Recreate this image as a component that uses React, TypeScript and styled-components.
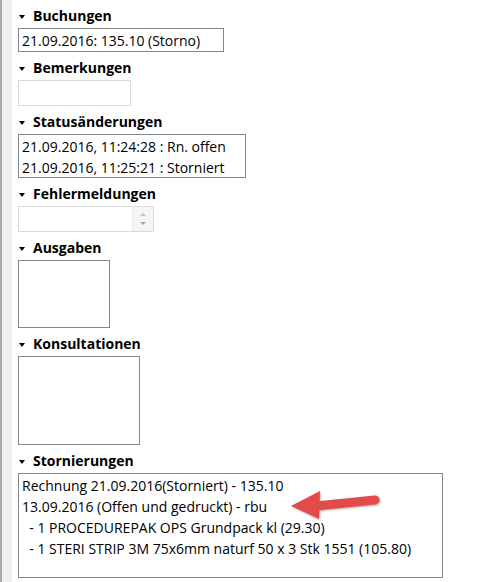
import React from 'react';
import styled, { createGlobalStyle } from 'styled-components';

const GlobalStyle = createGlobalStyle`
  html, body {
    margin: 0;
    padding: 0;
    background: #ffffff;
  }
  body {
    font-family: 'Open Sans', 'Segoe UI', 'Noto Sans', sans-serif;
    font-size: 14px;
    color: #000;
  }
`;

const Page = styled.div`
  display: flex;
  width: 504px;
  height: 582px;
  overflow: hidden;
`;

const SideStrip = styled.div`
  width: 10px;
  flex: none;
  border-left: 2px solid #a9a9a9;
  background: #f0f0f0;
`;

const Content = styled.div`
  flex: 1;
  padding: 4px 0 0 6px;
  display: flex;
  flex-direction: column;
`;

const Section = styled.section`
  display: flex;
  flex-direction: column;
  & + & {
    margin-top: 4px;
  }
`;

const Header = styled.div`
  display: flex;
  align-items: center;
  height: 24px;
  line-height: 24px;
  padding-left: 1px;
  gap: 8px;
  font-weight: 700;
  font-size: 14px;
`;

const Caret = styled.span`
  width: 0;
  height: 0;
  border-left: 3.5px solid transparent;
  border-right: 3.5px solid transparent;
  border-top: 4px solid #000;
  margin-top: 1px;
`;

const Box = styled.div<{ $w: number; $h: number; $light?: boolean }>`
  position: relative;
  box-sizing: border-box;
  width: ${(p) => p.$w}px;
  height: ${(p) => p.$h}px;
  border: 1px solid ${(p) => (p.$light ? '#dadada' : '#828790')};
  padding: 1px 3px 0;
  line-height: 21px;
  white-space: pre;
  background: #fff;
`;

const Line = styled.div`
  height: 21px;
`;

const Spinner = styled.div`
  position: absolute;
  top: 0;
  right: 0;
  bottom: 0;
  width: 20px;
  display: flex;
  flex-direction: column;
  align-items: center;
  justify-content: center;
  gap: 6px;
  background: #f5f5f5;
  border-left: 1px solid #ebebeb;
`;

const SpinArrow = styled.span<{ $down?: boolean }>`
  width: 0;
  height: 0;
  border-left: 3px solid transparent;
  border-right: 3px solid transparent;
  ${(p) =>
    p.$down
      ? 'border-top: 3px solid #a8a8a8;'
      : 'border-bottom: 3px solid #c4c4c4;'}
`;

const Annotation = styled.svg`
  position: absolute;
  left: 267px;
  top: 12px;
  overflow: visible;
  filter: drop-shadow(1px 1px 1px rgba(0, 0, 0, 0.3));
`;

const RedArrow = () => (
  <Annotation width="100" height="40" viewBox="0 0 100 40">
    <line x1="30" y1="20" x2="89" y2="14" stroke="#e34a4a" strokeWidth="9" strokeLinecap="round" />
    <polygon points="5,20 34,5 33,33" fill="#e34a4a" />
  </Annotation>
);

type Item = { title: string; w: number; h: number; light?: boolean; lines?: string[] };

const sections: Item[] = [
  { title: 'Buchungen', w: 206, h: 24, lines: ['21.09.2016: 135.10 (Storno)'] },
  { title: 'Bemerkungen', w: 113, h: 26, light: true },
  {
    title: 'Statusänderungen',
    w: 228,
    h: 44,
    lines: ['21.09.2016, 11:24:28 : Rn. offen', '21.09.2016, 11:25:21 : Storniert'],
  },
  { title: 'Fehlermeldungen', w: 136, h: 26, light: true },
  { title: 'Ausgaben', w: 92, h: 68 },
  { title: 'Konsultationen', w: 122, h: 89 },
];

const storno = [
  'Rechnung 21.09.2016(Storniert) - 135.10',
  '13.09.2016 (Offen und gedruckt) - rbu',
  '  - 1 PROCEDUREPAK OPS Grundpack kl (29.30)',
  '  - 1 STERI STRIP 3M 75x6mm naturf 50 x 3 Stk 1551 (105.80)',
];

export default function App() {
  return (
    <Page>
      <GlobalStyle />
      <SideStrip />
      <Content>
        {sections.map((s) => (
          <Section key={s.title}>
            <Header>
              <Caret />
              {s.title}
            </Header>
            <Box $w={s.w} $h={s.h} $light={s.light}>
              {s.lines?.map((l) => <Line key={l}>{l}</Line>)}
              {s.title === 'Fehlermeldungen' && (
                <Spinner>
                  <SpinArrow />
                  <SpinArrow $down />
                </Spinner>
              )}
            </Box>
          </Section>
        ))}
        <Section>
          <Header>
            <Caret />
            Stornierungen
          </Header>
          <Box $w={425} $h={105}>
            {storno.map((l) => (
              <Line key={l}>{l}</Line>
            ))}
            <RedArrow />
          </Box>
        </Section>
      </Content>
    </Page>
  );
}
